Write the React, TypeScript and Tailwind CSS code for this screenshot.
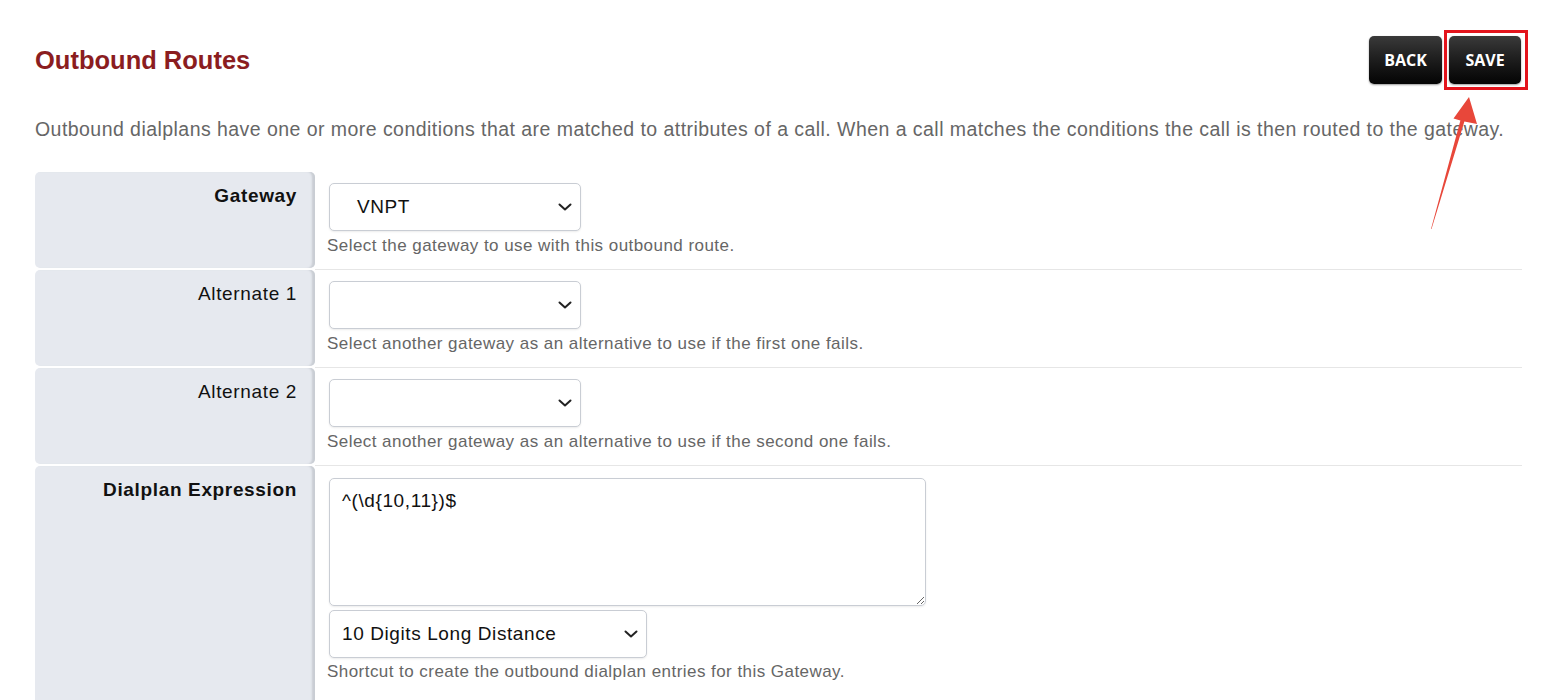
import React from "react";

const Chevron = () => (
  <svg width="14" height="8" viewBox="0 0 14 8" fill="none">
    <path d="M1.5 1.5 L7 6.5 L12.5 1.5" stroke="#222" strokeWidth="2" strokeLinecap="round" strokeLinejoin="round" />
  </svg>
);

function FakeSelect({ width, value, padLeft }: { width: string; value: string; padLeft: string }) {
  return (
    <div
      className={`${width} h-[48px] flex items-center justify-between border border-[#c9cdd4] rounded-[5px] bg-white shadow-[0_1px_2px_rgba(0,0,0,0.08)] pr-[8px] ${padLeft}`}
    >
      <span className="text-[19px] tracking-[0.6px] text-[#111]">{value}</span>
      <Chevron />
    </div>
  );
}

function Help({ children, mt }: { children: React.ReactNode; mt: string }) {
  return (
    <div className={`${mt} text-[17px] tracking-[0.45px] leading-[20px] text-[#666] -ml-[2px] whitespace-nowrap`}>
      {children}
    </div>
  );
}

function Row({
  label,
  bold,
  children,
  tall,
}: {
  label: string;
  bold?: boolean;
  children: React.ReactNode;
  tall?: boolean;
}) {
  return (
    <div className={`flex ${tall ? "h-[300px]" : "h-[98px]"}`}>
      <div
        className={`w-[280px] shrink-0 ${tall ? "h-[300px]" : "h-[96px]"} bg-[#e6e9ef] rounded-[5px] shadow-[inset_-4px_0_2px_-1px_#c9cdd3] text-right pr-[18px] pt-[13px] text-[19px] tracking-[0.65px] leading-[22px] text-[#111] whitespace-nowrap ${bold ? "font-bold" : ""}`}
      >
        {label}
      </div>
      <div
        className={`flex-1 pl-[14px] pt-[11px] box-border self-start ${tall ? "h-[300px]" : "h-[98px] border-b border-[#e6e6e6]"}`}
      >
        {children}
      </div>
    </div>
  );
}

export default function App() {
  return (
    <div className="relative w-[1554px] h-[700px] overflow-hidden bg-white font-['Liberation_Sans',Arial,sans-serif]">
      <div className="pl-[35px] pr-[32px] pt-[36px]">
        <div className="flex items-center justify-between h-[48px]">
          <h1 className="text-[25.5px] leading-[29px] font-bold text-[#8b1d1f] mt-[1px]">Outbound Routes</h1>
          <div className="flex gap-[7px] mr-[1px]">
            <button className="w-[73px] h-[48px] rounded-[5px] bg-gradient-to-b from-[#3a3a3a] to-[#050505] text-white text-[16px] font-bold font-['Open_Sans',sans-serif] shadow-[0_1px_2px_rgba(0,0,0,0.4)]">
              BACK
            </button>
            <div className="relative">
              <button className="w-[72px] h-[48px] rounded-[5px] bg-gradient-to-b from-[#3a3a3a] to-[#050505] text-white text-[16px] font-bold font-['Open_Sans',sans-serif] shadow-[0_1px_2px_rgba(0,0,0,0.4)]">
                SAVE
              </button>
              <div className="absolute left-[-5px] top-[-6px] w-[84px] h-[60px] border-[3px] border-[#e3141c] pointer-events-none" />
            </div>
          </div>
        </div>

        <p className="mt-[32px] text-[19.5px] tracking-[0.45px] leading-[26px] text-[#666] whitespace-nowrap">
          Outbound dialplans have one or more conditions that are matched to attributes of a call. When a call matches the conditions the call is then routed to the gateway.
        </p>

        <div className="mt-[30px] flex flex-col">
          <Row label="Gateway" bold>
            <FakeSelect width="w-[252px]" value="VNPT" padLeft="pl-[27px]" />
            <Help mt="mt-[5px]">Select the gateway to use with this outbound route.</Help>
          </Row>
          <Row label="Alternate 1">
            <FakeSelect width="w-[252px]" value="" padLeft="pl-[12px]" />
            <Help mt="mt-[5px]">Select another gateway as an alternative to use if the first one fails.</Help>
          </Row>
          <Row label="Alternate 2">
            <FakeSelect width="w-[252px]" value="" padLeft="pl-[12px]" />
            <Help mt="mt-[5px]">Select another gateway as an alternative to use if the second one fails.</Help>
          </Row>
          <Row label="Dialplan Expression" bold tall>
            <textarea
              readOnly
              defaultValue={"^(\\d{10,11})$"}
              className="block w-[597px] h-[128px] mt-[1px] border border-[#c9cdd4] rounded-[5px] px-[12px] pt-[11px] text-[19px] tracking-[0.6px] leading-[22px] text-[#111] outline-none resize shadow-[0_1px_2px_rgba(0,0,0,0.08)] font-['Liberation_Sans',Arial,sans-serif]"
            />
            <div className="mt-[4px]">
              <FakeSelect width="w-[318px]" value="10 Digits Long Distance" padLeft="pl-[12px]" />
            </div>
            <Help mt="mt-[4px]">Shortcut to create the outbound dialplan entries for this Gateway.</Help>
          </Row>
        </div>
      </div>

      <svg className="absolute left-[1420px] top-[90px] pointer-events-none" width="70" height="150" viewBox="1420 90 70 150">
        <polygon
          points="1469,97 1477,124 1464.4,121.4 1431.5,229 1431,229 1460.4,120.4 1453.5,118.6"
          fill="#e8473a"
        />
      </svg>
    </div>
  );
}
